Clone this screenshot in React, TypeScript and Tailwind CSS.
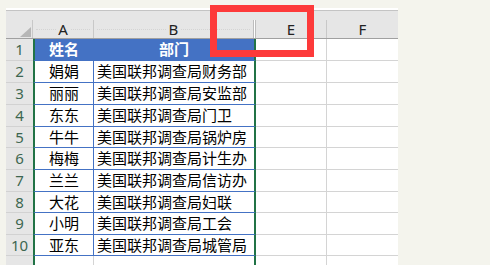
import React from "react";

const rows = [
  { n: 2, name: "娟娟", dept: "美国联邦调查局财务部", h: "h-[22px]" },
  { n: 3, name: "丽丽", dept: "美国联邦调查局安监部", h: "h-[22px]" },
  { n: 4, name: "东东", dept: "美国联邦调查局门卫", h: "h-[22px]" },
  { n: 5, name: "牛牛", dept: "美国联邦调查局锅炉房", h: "h-[21px]" },
  { n: 6, name: "梅梅", dept: "美国联邦调查局计生办", h: "h-[22px]" },
  { n: 7, name: "兰兰", dept: "美国联邦调查局信访办", h: "h-[22px]" },
  { n: 8, name: "大花", dept: "美国联邦调查局妇联", h: "h-[21px]" },
  { n: 9, name: "小明", dept: "美国联邦调查局工会", h: "h-[22px]" },
  { n: 10, name: "亚东", dept: "美国联邦调查局城管局", h: "h-[21px]" },
];

const font = "font-['Noto_Sans','Noto_Sans_CJK_SC',sans-serif]";

const RowHead = ({ n }: { n?: number }) => (
  <div className="flex w-[27px] shrink-0 items-center justify-center border-b border-[#d2d2d2] bg-[#e6e6e6] text-[15px] text-[#3d6650]">
    {n}
  </div>
);

const App = () => {
  return (
    <div className={`relative h-[265px] overflow-hidden bg-[#f4f4ed] pl-[6px] pt-[8px] ${font}`}>
      <div className="w-[392px] bg-white">
        {/* top strip */}
        <div className="h-[2px] bg-white" />

        {/* column header */}
        <div className="relative flex h-[29px] flex-col border-t border-b border-t-[#c4c4c4] border-b-[#a0a0a0] bg-[#e6e6e6]">
          <div className="h-[9px]" />
          <div className="flex h-[18px] text-[15px] leading-[18px] text-[#222]">
            <div className="relative w-[27px] border-r border-[#c8c8c8]">
              <svg width="27" height="18" viewBox="0 0 27 18" className="absolute left-0 top-0">
                <polygon points="25,7 25,17 14,17" fill="#b6b6b6" />
              </svg>
            </div>
            <div className="relative flex w-[61px] items-center justify-center border-r border-[#c8c8c8]">
              <div className="absolute left-[3px] right-[3px] top-[9px] border-t border-dotted border-[#d4d4d4]" />
              <span className="relative bg-[#e6e6e6] px-[2px]">A</span>
            </div>
            <div className="relative flex w-[159px] items-center justify-center">
              <div className="absolute left-[3px] right-[3px] top-[9px] border-t border-dotted border-[#d4d4d4]" />
              <span className="relative bg-[#e6e6e6] px-[2px]">B</span>
            </div>
            <div className="w-[3px] border-x border-[#bdbdbd] bg-white" />
            <div className="flex w-[71px] items-center justify-center border-r border-[#c8c8c8]">E</div>
            <div className="flex w-[71px] items-center justify-center">F</div>
          </div>
        </div>

        {/* header row 1 */}
        <div className="flex h-[22px] text-[15px] leading-none">
          <RowHead n={1} />
          <div className="flex w-[61px] items-center justify-center border-b border-l-2 border-r border-[#4472c4] border-l-[#217346] bg-[#4472c4] font-bold text-white">
            姓名
          </div>
          <div className="flex w-[162px] items-center justify-center border-b border-r-2 border-[#4472c4] border-r-[#217346] bg-[#4472c4] font-bold text-white">
            部门
          </div>
          <div className="w-[71px] border-b border-r border-[#d4d4d4]" />
          <div className="w-[71px] border-b border-[#d4d4d4]" />
        </div>

        {rows.map((r) => (
          <div key={r.n} className={`flex ${r.h} text-[15px] leading-none text-black`}>
            <RowHead n={r.n} />
            <div className="flex w-[61px] items-center justify-center border-b border-l-2 border-r border-[#4472c4] border-l-[#217346]">
              {r.name}
            </div>
            <div className="flex w-[162px] items-center border-b border-r-2 border-[#4472c4] border-r-[#217346] pl-[3px]">
              {r.dept}
            </div>
            <div className="w-[71px] border-b border-r border-[#d4d4d4]" />
            <div className="w-[71px] border-b border-[#d4d4d4]" />
          </div>
        ))}

        {/* row 11, cut off */}
        <div className="flex h-[22px]">
          <RowHead />
          <div className="w-[61px] border-l-2 border-r border-[#d4d4d4] border-l-[#217346]" />
          <div className="w-[162px] border-r-2 border-[#217346]" />
          <div className="w-[71px] border-r border-[#d4d4d4]" />
          <div className="w-[71px]" />
        </div>
      </div>

      {/* red annotation box */}
      <div className="absolute left-[210px] top-[5px] h-[52px] w-[104px] border-[7px] border-[#fd3a3a]" />
    </div>
  );
};

export default App;
